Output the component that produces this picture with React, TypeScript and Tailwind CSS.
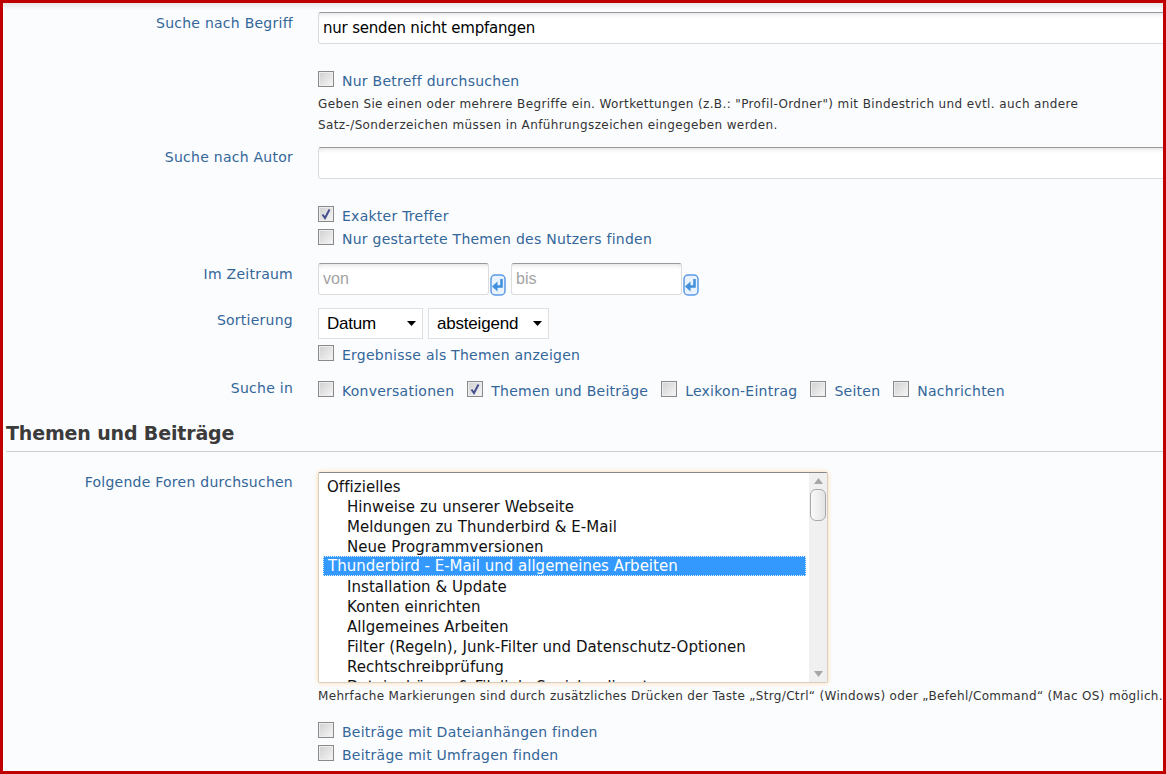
import type { ReactNode } from "react";

const forums = [
  { name: "Offizielles" },
  { name: "Hinweise zu unserer Webseite", sub: true },
  { name: "Meldungen zu Thunderbird & E-Mail", sub: true },
  { name: "Neue Programmversionen", sub: true },
  { name: "Thunderbird - E-Mail und allgemeines Arbeiten", selected: true },
  { name: "Installation & Update", sub: true },
  { name: "Konten einrichten", sub: true },
  { name: "Allgemeines Arbeiten", sub: true },
  { name: "Filter (Regeln), Junk-Filter und Datenschutz-Optionen", sub: true },
  { name: "Rechtschreibprüfung", sub: true },
  { name: "Dateianhänge & Filelink, Speicherdienste", sub: true },
];

function Box({ checked }: { checked?: boolean }) {
  return (
    <span className="flex h-4 w-4 shrink-0 items-center justify-center border border-[#8a8a8a] bg-gradient-to-br from-[#cfcfcf] to-[#f7f7f7] shadow-[inset_0_0_0_1px_#eeeeee]">
      {checked && (
        <svg viewBox="0 0 12 12" className="h-3 w-3">
          <path d="M2.5 6.5 L5 10 L9.5 1.5" fill="none" stroke="#46508f" strokeWidth="2" />
        </svg>
      )}
    </span>
  );
}

function Check({ label, checked }: { label: string; checked?: boolean }) {
  return (
    <label className="flex h-[23px] items-start gap-2 text-[#336699]">
      <Box checked={checked} />
      <span className="relative top-px whitespace-nowrap leading-[18px]">{label}</span>
    </label>
  );
}

function Row({
  label,
  children,
  className,
  labelClass,
}: {
  label?: string;
  children: ReactNode;
  className?: string;
  labelClass?: string;
}) {
  return (
    <div className={`flex ${className ?? ""}`}>
      <div className={`w-[290px] shrink-0 whitespace-nowrap text-right leading-[18px] text-[#336699] ${labelClass ?? ""}`}>
        {label}
      </div>
      <div className="ml-[25px] min-w-0 flex-1">{children}</div>
    </div>
  );
}

function TextBox({ value, className }: { value?: string; className?: string }) {
  return (
    <div
      className={`flex h-[32px] items-center rounded-[3px] border border-[#dcdcdc] border-t-[#999999] bg-white px-[4px] text-[15px] tracking-[-0.2px] shadow-[inset_0_5px_5px_-4px_#dddddd] ${className ?? ""}`}
    >
      {value}
    </div>
  );
}

function CalendarIcon() {
  return (
    <svg viewBox="0 0 16 22" className="mb-[-1px] ml-px h-[22px] w-4 shrink-0">
      <rect x="1" y="1" width="14" height="20" rx="4" fill="#e9f2fd" stroke="#5b9ae6" strokeWidth="1.5" />
      <path d="M11.5 5 V12.5 H6" fill="none" stroke="#3f8fdc" strokeWidth="2.5" />
      <path d="M7.5 7.5 L2 12.5 L7.5 17.5 Z" fill="#3f8fdc" />
    </svg>
  );
}

function DateBox({ placeholder }: { placeholder: string }) {
  return (
    <div className="flex items-end">
      <div className="flex h-[32px] w-[171px] items-center rounded-[3px] border border-[#dcdcdc] border-t-[#999999] bg-white px-[4px] font-['Liberation_Sans',sans-serif] text-[16px] tracking-normal text-[#a3a3a3] shadow-[inset_0_5px_5px_-4px_#dddddd]">
        {placeholder}
      </div>
      <CalendarIcon />
    </div>
  );
}

function Dropdown({ value, className }: { value: string; className: string }) {
  return (
    <div
      className={`flex h-[31px] items-center justify-between border border-[#e0e0e0] bg-white pl-[8px] pr-[6px] font-['Liberation_Sans',sans-serif] text-[17px] tracking-[-0.2px] text-black ${className}`}
    >
      {value}
      <svg viewBox="0 0 9 5" className="h-[5px] w-[9px]">
        <path d="M0 0 H9 L4.5 5 Z" fill="#000000" />
      </svg>
    </div>
  );
}

function ForumList() {
  return (
    <div className="flex h-[211px] w-[510px] overflow-hidden rounded-[2px] border border-[#d8cfc0] border-t-[#888888] bg-white shadow-[0_0_5px_#fbd9a8]">
      <div className="min-w-0 flex-1 overflow-hidden pl-1 pr-[3px] pt-[3px] text-[15px] tracking-[0.05px] text-[#111111]">
        {forums.map((f) => (
          <div
            key={f.name}
            className={`h-5 whitespace-nowrap ${f.sub ? "pl-6" : "pl-[4px]"} ${
              f.selected
                ? "border border-dotted border-[#dff0ff] bg-[#3399ff] pl-[3px] leading-[18px] tracking-normal text-white"
                : "leading-[22px]"
            }`}
          >
            {f.name}
          </div>
        ))}
      </div>
      <div className="flex w-[18px] shrink-0 flex-col items-center justify-between bg-[#f0f0f0] py-[5px]">
        <div className="flex w-full flex-col items-center">
          <svg viewBox="0 0 9 6" className="h-[6px] w-[9px]">
            <path d="M4.5 0 L9 6 H0 Z" fill="#a6a6a6" />
          </svg>
          <div className="mt-[5px] h-[32px] w-[16px] rounded-[6px] border border-[#a8a8a8] bg-gradient-to-r from-[#fafafa] to-[#e4e4e4]" />
        </div>
        <svg viewBox="0 0 9 6" className="h-[6px] w-[9px]">
          <path d="M0 0 H9 L4.5 6 Z" fill="#a6a6a6" />
        </svg>
      </div>
    </div>
  );
}

export default function App() {
  return (
    <div className="h-[774px] w-[1166px] overflow-hidden border-[3px] border-[#c00000] bg-[#fbfcfe] font-['DejaVu_Sans',sans-serif] text-[14px] tracking-[0.25px]">
      <div className="h-[7px] bg-gradient-to-b from-[#e8e8e8] to-[#fbfcfe]" />
      <Row label="Suche nach Begriff" className="mt-[2px]" labelClass="pt-[2px]">
        <TextBox value="nur senden nicht empfangen" className="-mr-2 text-black" />
      </Row>
      <div className="ml-[315px] mt-[27px]">
        <Check label="Nur Betreff durchsuchen" />
        <p className="whitespace-nowrap text-[12px] leading-[21px] tracking-[0.38px] text-[#333333]">
          Geben Sie einen oder mehrere Begriffe ein. Wortkettungen (z.B.: "Profil-Ordner") mit Bindestrich und evtl. auch andere
          <br />
          Satz-/Sonderzeichen müssen in Anführungszeichen eingegeben werden.
        </p>
      </div>
      <Row label="Suche nach Autor" className="mt-[11px]" labelClass="pt-px">
        <TextBox className="-mr-2" />
      </Row>
      <div className="ml-[315px] mt-[27px]">
        <Check label="Exakter Treffer" checked />
        <Check label="Nur gestartete Themen des Nutzers finden" />
      </div>
      <Row label="Im Zeitraum" className="mt-[11px]" labelClass="pt-[2px]">
        <div className="flex gap-[5px]">
          <DateBox placeholder="von" />
          <DateBox placeholder="bis" />
        </div>
      </Row>
      <Row label="Sortierung" className="mt-[13px]" labelClass="pt-[3px]">
        <div className="flex gap-[5px]">
          <Dropdown value="Datum" className="w-[105px]" />
          <Dropdown value="absteigend" className="w-[121px]" />
        </div>
        <div className="mt-[6px]">
          <Check label="Ergebnisse als Themen anzeigen" />
        </div>
      </Row>
      <Row label="Suche in" className="mt-[13px]" labelClass="-mt-[2px]">
        <div className="flex gap-[13px]">
          <Check label="Konversationen" />
          <Check label="Themen und Beiträge" checked />
          <Check label="Lexikon-Eintrag" />
          <Check label="Seiten" />
          <Check label="Nachrichten" />
        </div>
      </Row>
      <h2 className="ml-[3px] mt-[14px] border-b border-[#d0d0d0] pb-[3px] text-[19px] font-bold leading-[30px] tracking-[-0.15px] text-[#3b3b3b]">
        Themen und Beiträge
      </h2>
      <Row label="Folgende Foren durchsuchen" className="mt-[20px]" labelClass="pt-px">
        <ForumList />
        <p className="mt-[4px] whitespace-nowrap text-[12px] leading-[18px] tracking-[0.33px] text-[#333333]">
          Mehrfache Markierungen sind durch zusätzliches Drücken der Taste „Strg/Ctrl“ (Windows) oder „Befehl/Command“ (Mac OS) möglich.
        </p>
        <div className="mt-[17px]">
          <Check label="Beiträge mit Dateianhängen finden" />
          <Check label="Beiträge mit Umfragen finden" />
        </div>
      </Row>
    </div>
  );
}
